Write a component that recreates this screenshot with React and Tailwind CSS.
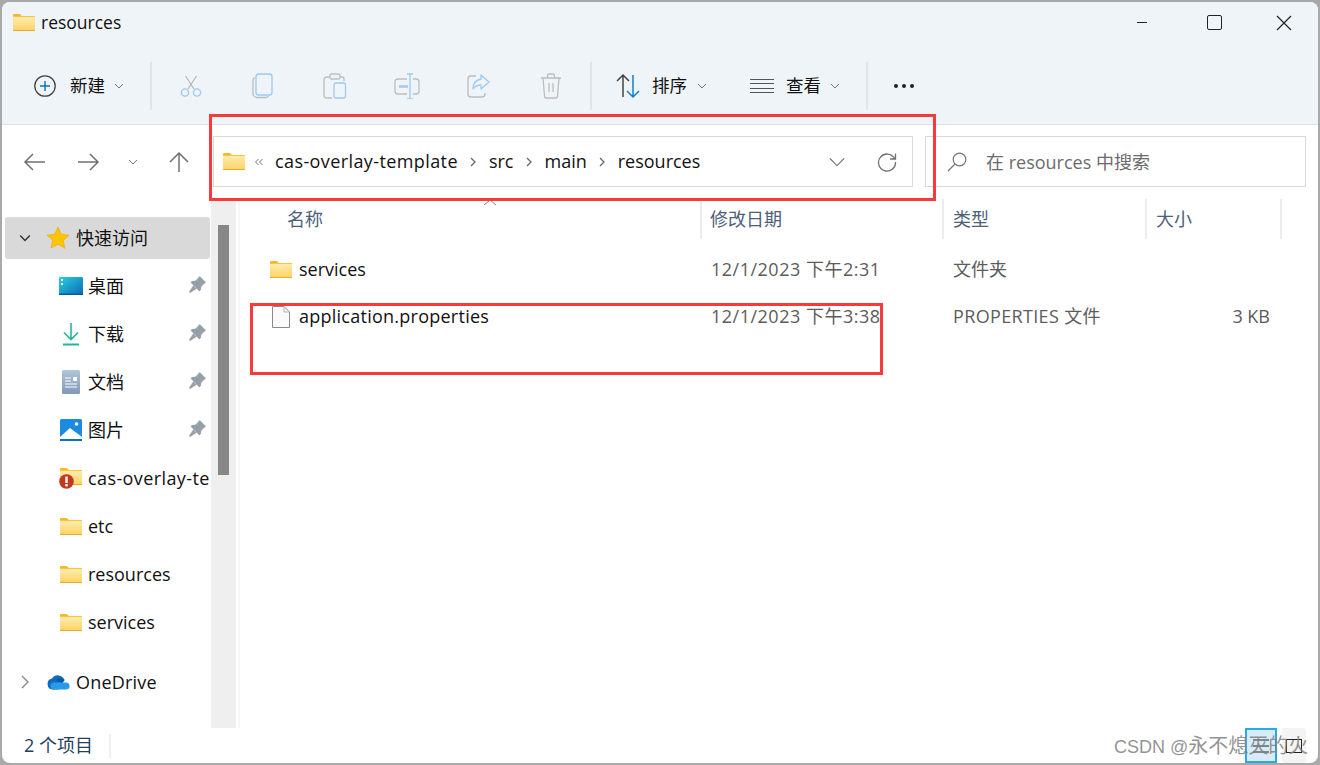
import React from "react";

const FONT = { fontFamily: '"Open Sans", "Noto Sans CJK SC", sans-serif' };

const Folder = ({ className = "" }) => (
  <svg width="22" height="17" viewBox="0 0 22 17" className={className}>
    <defs>
      <linearGradient id="folderBody" x1="0" y1="0" x2="0" y2="1">
        <stop offset="0" stopColor="#ffeeb0" />
        <stop offset="1" stopColor="#fdd265" />
      </linearGradient>
    </defs>
    <path d="M0 1a1 1 0 0 1 1-1h6l2 2.5H0z" fill="#f9b827" />
    <rect x="0" y="2" width="22" height="15" fill="url(#folderBody)" />
    <rect x="0" y="2" width="22" height="1" fill="#f6c445" />
    <rect x="0" y="16" width="22" height="1" fill="#eaa928" />
  </svg>
);

const Chevron = ({ size = 10, color = "#777", width = 1 }) => (
  <svg width={size} height={size} viewBox="0 0 10 10" fill="none">
    <path d="M1 3l4 4 4-4" stroke={color} strokeWidth={width} />
  </svg>
);

const Pin = () => (
  <svg width="17" height="17" viewBox="0 0 16 16" fill="#97a0a8">
    <path d="M10 0l6 6-1.500 1-3 3-.3 3.200L9.800 14.500 1.500 6.200 2.800 4.800 6 4.500l3-3z" />
    <path d="M4 9l3 3-6 4-1-1z" />
  </svg>
);

const Cut = () => (
  <svg width="24" height="24" viewBox="0 0 24 24" fill="none">
    <path d="M6.500 2l8.500 13M17.500 2l-8.500 13" stroke="#b5b5b5" strokeWidth="1.200" />
    <circle cx="6" cy="18.500" r="3.600" stroke="#9ccaf0" strokeWidth="1.400" />
    <circle cx="18" cy="18.500" r="3.600" stroke="#9ccaf0" strokeWidth="1.400" />
  </svg>
);

const Copy = () => (
  <svg width="24" height="26" viewBox="0 0 24 26" fill="none">
    <path d="M4 4.500A3 3 0 0 0 2 7.500v13a4 4 0 0 0 4 4h9a3 3 0 0 0 2.500-1.500" stroke="#bdbdbd" strokeWidth="1.300" />
    <rect x="5" y="1" width="16" height="21" rx="2.500" stroke="#9ccaf0" strokeWidth="1.300" />
  </svg>
);

const Paste = () => (
  <svg width="24" height="26" viewBox="0 0 24 26" fill="none">
    <path d="M7 4H3.500A2.500 2.500 0 0 0 1 6.500v16A2.500 2.500 0 0 0 3.500 25H9M17 4h2a2 2 0 0 1 2 2v2" stroke="#bdbdbd" strokeWidth="1.300" />
    <rect x="7" y="1" width="10" height="5" rx="1.500" stroke="#bdbdbd" strokeWidth="1.300" />
    <rect x="11" y="10" width="11.500" height="15" rx="2" stroke="#9ccaf0" strokeWidth="1.300" />
  </svg>
);

const Rename = () => (
  <svg width="26" height="26" viewBox="0 0 26 26" fill="none">
    <path d="M13 6H4a3 3 0 0 0-3 3v9a3 3 0 0 0 3 3h9M19 6h3a3 3 0 0 1 3 3v9a3 3 0 0 1-3 3h-3" stroke="#bdbdbd" strokeWidth="1.300" />
    <path d="M5 13.500h9" stroke="#9ccaf0" strokeWidth="2.600" />
    <path d="M13 1h6M13 26h6M16 1v25" stroke="#9ccaf0" strokeWidth="1.300" />
  </svg>
);

const Share = () => (
  <svg width="24" height="26" viewBox="0 0 24 26" fill="none">
    <path d="M9 3H4a3 3 0 0 0-3 3v15a3 3 0 0 0 3 3h11a3 3 0 0 0 3-3v-1" stroke="#bdbdbd" strokeWidth="1.300" />
    <path d="M14 2l8 7-8 7v-4c-4 0-6 1-8 4 0-6 3-9 8-10z" stroke="#9ccaf0" strokeWidth="1.300" strokeLinejoin="round" />
  </svg>
);

const Trash = () => (
  <svg width="22" height="26" viewBox="0 0 22 26" fill="none" stroke="#bdbdbd" strokeWidth="1.300">
    <path d="M1 5h20M7.500 5V3a2 2 0 0 1 2-2h3a2 2 0 0 1 2 2v2" />
    <path d="M3 5l1.500 18a2 2 0 0 0 2 2h9a2 2 0 0 0 2-2L19 5" />
    <path d="M9 10v9M13 10v9" />
  </svg>
);

const SortIcon = () => (
  <svg width="24" height="26" viewBox="0 0 24 26" fill="none" strokeWidth="1.500">
    <path d="M7 24V2M1 8l6-6 6 6" stroke="#444" />
    <path d="M17 2v22M11 18l6 6 6-6" stroke="#0f7fd4" />
  </svg>
);

const ViewIcon = () => (
  <svg width="24" height="16" viewBox="0 0 24 16" fill="none" stroke="#555" strokeWidth="1.200">
    <path d="M0 1.500h24M0 5.500h24M0 10.500h24M0 14.500h24" />
  </svg>
);

const ToolIcon = ({ children }) => (
  <div className="flex h-[30px] w-[72px] items-center justify-center">{children}</div>
);

const Separator = () => <div className="h-[48px] w-[2px] bg-[#e1e5e9]" />;

const Desktop = () => (
  <svg width="24" height="18" viewBox="0 0 24 18">
    <defs>
      <linearGradient id="deskFill" x1="0" y1="0" x2="1" y2="1">
        <stop offset="0" stopColor="#2ad0e0" />
        <stop offset="1" stopColor="#0b69b4" />
      </linearGradient>
    </defs>
    <rect width="24" height="18" rx="1" fill="url(#deskFill)" />
    <rect x="2" y="2" width="2" height="2" fill="#fff" />
    <rect x="2" y="6" width="2" height="2" fill="#fff" />
    <rect y="16.500" width="24" height="1.500" fill="#0a5aa0" />
  </svg>
);

const Download = () => (
  <svg width="18" height="24" viewBox="0 0 18 24" fill="none" stroke="#22b59a" strokeWidth="1.600">
    <path d="M9 1v16M2 10.500l7 7 7-7" />
    <path d="M1 22.500h16" strokeWidth="2" />
  </svg>
);

const Docs = () => (
  <svg width="18" height="24" viewBox="0 0 18 24">
    <defs>
      <linearGradient id="docFill" x1="0" y1="0" x2="0" y2="1">
        <stop offset="0" stopColor="#b2c4d8" />
        <stop offset="1" stopColor="#7f99b6" />
      </linearGradient>
    </defs>
    <rect width="18" height="24" rx="1.500" fill="url(#docFill)" />
    <rect x="11" y="7" width="4" height="4" fill="#fff" />
    <path d="M3 8h6M3 11h6M3 14h12M3 17h12" stroke="#fff" strokeWidth="1" />
  </svg>
);

const Pictures = () => (
  <svg width="22" height="22" viewBox="0 0 22 22">
    <rect width="22" height="22" rx="1.500" fill="#1b8ae0" />
    <circle cx="16.500" cy="5" r="1.800" fill="#fff" />
    <path d="M0 18l10-9 12 9v2.500a1.500 1.500 0 0 1-1.500 1.500h-19A1.500 1.500 0 0 1 0 20.500z" fill="#fff" />
    <rect y="20" width="22" height="2" fill="#0f70c0" />
  </svg>
);

const WarnFolder = () => (
  <div className="relative h-[21px] w-[24px]">
    <Folder className="ml-[1px]" />
    <svg width="15" height="15" viewBox="0 0 15 15" className="absolute bottom-0 left-0">
      <circle cx="7.500" cy="7.500" r="7.300" fill="#c13a1c" />
      <rect x="6.300" y="2.500" width="2.400" height="6.500" fill="#fff" />
      <rect x="6.300" y="10" width="2.400" height="2.400" fill="#fff" />
    </svg>
  </div>
);

const Star = () => (
  <svg width="24" height="24" viewBox="0 0 24 24">
    <path d="M12 1l3.300 7.300 7.700.9-5.700 5.300 1.600 7.800L12 18.300 5.100 22l1.600-7.800L1 9.200l7.700-.9z" fill="#fdc400" stroke="#f3a800" strokeWidth="0.600" />
  </svg>
);

const OneDrive = () => (
  <svg width="24" height="16" viewBox="0 0 24 16">
    <path d="M6 15.500a5.500 5.500 0 0 1-1-10.900A7 7 0 0 1 17.500 6l-6 9.500z" fill="#0f6cbd" />
    <path d="M9 6a6 6 0 0 1 8.500 0l-3 4z" fill="#0a5aa6" />
    <path d="M7 15.500a3.500 3.500 0 0 1 0-7h11.500a3.500 3.500 0 0 1 1 7z" fill="#2a9be8" />
  </svg>
);

const quickItems = [
  { label: "桌面", icon: <Desktop />, pin: true },
  { label: "下载", icon: <Download />, pin: true },
  { label: "文档", icon: <Docs />, pin: true },
  { label: "图片", icon: <Pictures />, pin: true },
  { label: "cas-overlay-te", icon: <WarnFolder />, wide: true },
  { label: "etc", icon: <Folder /> },
  { label: "resources", icon: <Folder /> },
  { label: "services", icon: <Folder /> },
];

const columns = [
  { label: "名称", width: "w-[462px]", pad: "pl-[47px]" },
  { label: "修改日期", width: "w-[242px]", pad: "pl-[8px]" },
  { label: "类型", width: "w-[203px]", pad: "pl-[9px]" },
  { label: "大小", width: "w-[135px]", pad: "pl-[9px]" },
];

const CrumbArrow = () => (
  <svg width="8" height="10" viewBox="0 0 8 10" fill="none" className="mx-[11.500px]">
    <path d="M2 1l4 4-4 4" stroke="#666" strokeWidth="1.300" />
  </svg>
);

export default function App() {
  return (
    <div style={FONT} className="relative h-[765px] w-[1320px] overflow-hidden bg-[#a9a9a9] p-[2px] text-[18px] text-[#111]">
      <div className="flex h-[761px] w-[1316px] flex-col overflow-hidden rounded-[8px] bg-white">
        {/* title bar */}
        <div className="flex h-[41px] shrink-0 items-center bg-[#eff4f9] pl-[11px]">
          <Folder />
          <span className="ml-[6px] text-[17.500px]">resources</span>
          <div className="ml-auto flex items-center">
            <div className="flex w-[72px] justify-center">
              <div className="h-[1.500px] w-[10px] bg-[#222]" />
            </div>
            <div className="flex w-[72px] justify-center">
              <div className="h-[15px] w-[15px] rounded-[2px] border-[1.500px] border-[#222]" />
            </div>
            <div className="flex w-[68px] justify-center">
              <svg width="16" height="16" viewBox="0 0 16 16" fill="none" stroke="#222" strokeWidth="1.200">
                <path d="M1 1l14 14M15 1L1 15" />
              </svg>
            </div>
          </div>
        </div>

        {/* toolbar */}
        <div className="flex h-[82px] shrink-0 items-center border-b border-[#dfe3e8] bg-[#eff4f9] pl-[32px] pt-[4px]">
          <svg width="22" height="22" viewBox="0 0 22 22" fill="none">
            <circle cx="11" cy="11" r="10.200" stroke="#444" strokeWidth="1.300" />
            <path d="M11 6v10M6 11h10" stroke="#0f6cbd" strokeWidth="1.400" />
          </svg>
          <span className="ml-[14px] text-[17.500px]">新建</span>
          <span className="ml-[9px]"><Chevron /></span>
          <div className="ml-[26px]"><Separator /></div>
          <div className="ml-[3px] flex">
            <ToolIcon><Cut /></ToolIcon>
            <ToolIcon><Copy /></ToolIcon>
            <ToolIcon><Paste /></ToolIcon>
            <ToolIcon><Rename /></ToolIcon>
            <ToolIcon><Share /></ToolIcon>
            <ToolIcon><Trash /></ToolIcon>
          </div>
          <div className="ml-[3px]"><Separator /></div>
          <div className="ml-[24px]"><SortIcon /></div>
          <span className="ml-[12px] text-[17.500px]">排序</span>
          <span className="ml-[10px]"><Chevron /></span>
          <div className="ml-[43px]"><ViewIcon /></div>
          <span className="ml-[12px] text-[17.500px]">查看</span>
          <span className="ml-[9px]"><Chevron /></span>
          <div className="ml-[26px]"><Separator /></div>
          <div className="ml-[26px] flex gap-[4px]">
            <div className="h-[4px] w-[4px] rounded-full bg-[#222]" />
            <div className="h-[4px] w-[4px] rounded-full bg-[#222]" />
            <div className="h-[4px] w-[4px] rounded-full bg-[#222]" />
          </div>
        </div>

        {/* address row */}
        <div className="flex h-[74px] shrink-0 pt-[11px]">
          <div className="flex h-[51px] w-[211px] items-center pl-[21px]">
            <svg width="24" height="20" viewBox="0 0 24 20" fill="none" stroke="#707070" strokeWidth="1.500">
              <path d="M22 10H2M10 2l-8 8 8 8" />
            </svg>
            <svg width="24" height="20" viewBox="0 0 24 20" fill="none" stroke="#707070" strokeWidth="1.500" className="ml-[29px]">
              <path d="M2 10h20M14 2l8 8-8 8" />
            </svg>
            <span className="ml-[28px]"><Chevron /></span>
            <svg width="20" height="22" viewBox="0 0 20 22" fill="none" stroke="#707070" strokeWidth="1.500" className="ml-[31px]">
              <path d="M10 21V2M1 11l9-9 9 9" />
            </svg>
          </div>
          <div className="flex h-[51px] w-[700px] items-center border border-[#d9d9d9] pl-[9px] pr-[15px]">
            <Folder />
            <svg width="10" height="10" viewBox="0 0 10 10" fill="none" stroke="#777" className="ml-[9px]">
              <path d="M4.500 2l-3 3 3 3M8.500 2l-3 3 3 3" />
            </svg>
            <span className="ml-[11px] tracking-[0.4px]">cas-overlay-template</span>
            <CrumbArrow />
            <span>src</span>
            <CrumbArrow />
            <span>main</span>
            <CrumbArrow />
            <span>resources</span>
            <span className="ml-auto"><Chevron size={18} color="#666" width={0.6} /></span>
            <svg width="20" height="20" viewBox="0 0 20 20" fill="none" stroke="#707070" strokeWidth="1.300" className="ml-[31px]">
              <path d="M17.500 6.500A8.500 8.500 0 1 0 18.500 10M18.500 1.500v5.500h-5.500" />
            </svg>
          </div>
          <div className="ml-[12px] flex h-[51px] w-[381px] items-center border border-[#d9d9d9] pl-[21px] text-[#6c6c6c]">
            <svg width="20" height="20" viewBox="0 0 20 20" fill="none" stroke="#777" strokeWidth="1.200">
              <circle cx="12.500" cy="7.500" r="6.300" />
              <path d="M8 12l-7 7" />
            </svg>
            <span className="ml-[19px] mt-[1px]">在 resources 中搜索</span>
          </div>
        </div>

        {/* body */}
        <div className="flex min-h-0 flex-1">
          <div className="w-[209px] shrink-0 pt-[15px]">
            <div className="flex h-[48px] items-center">
              <div className="ml-[3px] flex h-[42px] w-[205px] items-center rounded-[3px] bg-[#d9d9d9] pl-[14px]">
                <Chevron size={12} color="#333" width={1.200} />
                <span className="ml-[15px]"><Star /></span>
                <span className="ml-[6px]">快速访问</span>
              </div>
            </div>
            {quickItems.map((item) => (
              <div key={item.label} className="relative flex h-[48px] items-center overflow-hidden">
                <div className="ml-[57px] flex w-[24px] justify-center">{item.icon}</div>
                <span className={`ml-[5px] whitespace-nowrap ${item.wide ? "tracking-[0.4px]" : ""}`}>{item.label}</span>
                {item.pin && (
                  <span className="absolute left-[187px] top-[14px]"><Pin /></span>
                )}
              </div>
            ))}
            <div className="mt-[12px] flex h-[48px] items-center pl-[19px]">
              <svg width="8" height="14" viewBox="0 0 8 14" fill="none" stroke="#888" strokeWidth="1.400">
                <path d="M1 1l6 6-6 6" />
              </svg>
              <span className="ml-[18px]"><OneDrive /></span>
              <span className="ml-[5px] tracking-[0.2px]">OneDrive</span>
            </div>
          </div>

          <div className="w-[25px] shrink-0 bg-[#efefef] pl-[7px] pt-[26px]">
            <div className="h-[250px] w-[11px] bg-[#878787]" />
          </div>
          <div className="ml-[2px] w-[2px] shrink-0 bg-[#f6f6f6]" />

          <div className="min-w-0 flex-1">
            <div className="relative flex h-[40px]">
              <svg width="14" height="7" viewBox="0 0 14 7" fill="none" stroke="#888" className="absolute left-[243px] top-0">
                <path d="M1 6l6-5 6 5" />
              </svg>
              {columns.map((col) => (
                <div key={col.label} className={`flex items-center border-r-2 border-[#ececec] text-[#4c6079] ${col.width} ${col.pad}`}>
                  {col.label}
                </div>
              ))}
            </div>
            <div className="mt-[7px] flex h-[47px] items-center">
              <div className="flex w-[462px] items-center pl-[30px]">
                <Folder />
                <span className="ml-[7px]">services</span>
              </div>
              <div className="w-[242px] pl-[9px] tracking-[0.5px] text-[#5c5c5c]">12/1/2023 下午2:31</div>
              <div className="w-[203px] pl-[9px] text-[#5c5c5c]">文件夹</div>
            </div>
            <div className="flex h-[47px] items-center">
              <div className="flex w-[462px] items-center pl-[32px]">
                <svg width="18" height="22" viewBox="0 0 18 22">
                  <path d="M.5.500h11.500l5.500 5.500v15.500H.5z" fill="#fbfbfb" stroke="#8a8a8a" />
                  <path d="M12 .5V6h5.500" fill="none" stroke="#b5b5b5" />
                </svg>
                <span className="ml-[9px] tracking-[0.25px]">application.properties</span>
              </div>
              <div className="w-[242px] pl-[9px] tracking-[0.5px] text-[#5c5c5c]">12/1/2023 下午3:38</div>
              <div className="w-[203px] pl-[9px] tracking-[0.35px] text-[#5c5c5c]">PROPERTIES 文件</div>
              <div className="w-[123px] text-right text-[#5c5c5c]">3 KB</div>
            </div>
          </div>
        </div>

        {/* status bar */}
        <div className="flex h-[35px] shrink-0 items-center pl-[22px] text-[#24405f]">
          <span>2 个项目</span>
          <div className="ml-[16px] h-[24px] w-[2px] bg-[#f0f0f0]" />
          <div className="ml-auto mr-[12px] flex h-full items-stretch gap-[5px]">
            <div className="flex w-[32px] items-center justify-center border-2 border-[#2aa8ec] bg-[#d8ebf8]">
              <svg width="18" height="16" viewBox="0 0 18 16" fill="none" stroke="#222">
                <path d="M1 2h16M1 8h16M1 14h16" />
              </svg>
            </div>
            <div className="flex w-[24px] items-center justify-center rounded-[3px] bg-[#f4f4f4]">
              <svg width="18" height="16" viewBox="0 0 18 16" fill="none" stroke="#222">
                <rect x="1.500" y="1.500" width="15" height="13" />
              </svg>
            </div>
          </div>
        </div>
      </div>

      {/* annotations drawn over the window */}
      <div className="absolute left-[209px] top-[114px] h-[87px] w-[727px] border-[3px] border-[#f93a3a]" />
      <div className="absolute left-[250px] top-[303px] h-[72px] w-[633px] border-[3px] border-[#f93a3a]" />
      <div
        style={{ fontFamily: '"Liberation Sans", "Noto Sans CJK SC", sans-serif' }}
        className="absolute left-[1114px] top-[734px] text-[18px] leading-[24px] text-[#808080]/85"
      >
        CSDN @<span className="text-[20px]">永不熄灭的火</span>
      </div>
    </div>
  );
}
